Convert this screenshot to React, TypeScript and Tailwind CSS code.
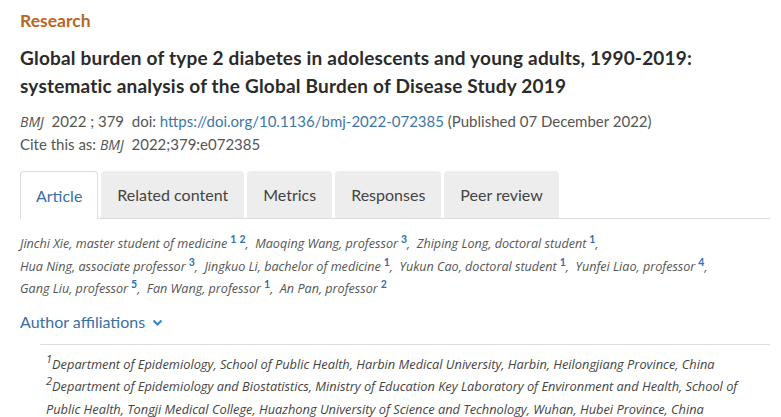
import React from "react";

const TABS = ["Article", "Related content", "Metrics", "Responses", "Peer review"];

type Author = { name: string; sup: string[] };

const AUTHOR_LINES: Author[][] = [
  [
    { name: "Jinchi Xie, master student of medicine", sup: ["1", "2"] },
    { name: "Maoqing Wang, professor", sup: ["3"] },
    { name: "Zhiping Long, doctoral student", sup: ["1"] },
  ],
  [
    { name: "Hua Ning, associate professor", sup: ["3"] },
    { name: "Jingkuo Li, bachelor of medicine", sup: ["1"] },
    { name: "Yukun Cao, doctoral student", sup: ["1"] },
    { name: "Yunfei Liao, professor", sup: ["4"] },
  ],
  [
    { name: "Gang Liu, professor", sup: ["5"] },
    { name: "Fan Wang, professor", sup: ["1"] },
    { name: "An Pan, professor", sup: ["2"] },
  ],
];

const ITALIC = { fontFamily: "'Open Sans', 'DejaVu Sans', sans-serif" };

function Sup({ n }: { n: string }) {
  return (
    <sup
      className="text-[10.5px] font-bold text-[#2f6fae] ml-[3px] not-italic top-[-5px]"
      style={{ fontFamily: "Lato, sans-serif" }}
    >
      {n}
    </sup>
  );
}

export default function App() {
  return (
    <div
      className="w-[781px] h-[417px] overflow-hidden bg-white pl-5 pr-[11px] text-[#333]"
      style={{ fontFamily: "Lato, 'Open Sans', sans-serif" }}
    >
      <div className="pt-[10px] text-[17.5px] font-bold text-[#b9671f] leading-[22px]">Research</div>

      <h1 className="mt-[12px] text-[19px] tracking-[0.2px] font-bold leading-[28px] text-[#2b2b2b]">
        Global burden of type 2 diabetes in adolescents and young adults, 1990-2019:
        <br />
        systematic analysis of the Global Burden of Disease Study 2019
      </h1>

      <div className="mt-[10px] text-[15px] leading-[22px] text-[#555]">
        <div>
          <i style={ITALIC} className="text-[14px]">BMJ</i>&nbsp; 2022 ; 379&nbsp; doi:{" "}
          <span className="text-[#3d77a8]">https://doi.org/10.1136/bmj-2022-072385</span> (Published 07 December
          2022)
        </div>
        <div>
          Cite this as: <i style={ITALIC} className="text-[14px]">BMJ</i>&nbsp; 2022;379:e072385
        </div>
      </div>

      <div className="mt-[15px] flex gap-[3px] border-b border-[#dcdcdc]">
        {TABS.map((t, i) =>
          i === 0 ? (
            <div
              key={t}
              className="-mb-px h-[48px] px-[15px] flex items-center rounded-t-[4px] border border-b-0 border-[#dcdcdc] bg-white text-[16px] text-[#3a6fa5]"
            >
              {t}
            </div>
          ) : (
            <div
              key={t}
              className="h-[47px] px-[16px] flex items-center rounded-t-[4px] bg-[#ededed] text-[16px] text-[#444]"
            >
              {t}
            </div>
          )
        )}
      </div>

      <div className="mt-[14px] text-[12.6px] italic leading-[22.5px] text-[#555]" style={ITALIC}>
        {AUTHOR_LINES.map((line, li) => (
          <div key={li}>
            {line.map((a, ai) => (
              <span key={a.name}>
                {a.name}
                {a.sup.map((s) => (
                  <Sup key={s} n={s} />
                ))}
                {(ai < line.length - 1 || li < AUTHOR_LINES.length - 1) && <span>,&nbsp; </span>}
              </span>
            ))}
          </div>
        ))}
      </div>

      <div className="mt-[9px] flex items-center gap-[7px] text-[16px] text-[#3a6fa5] leading-[24px]">
        Author affiliations
        <svg width="11" height="8" viewBox="0 0 11 8" className="mt-[2px]">
          <path d="M1.5 1.5 L5.5 5.5 L9.5 1.5" fill="none" stroke="#3a86c8" strokeWidth="2.2" />
        </svg>
      </div>

      <div
        className="ml-5 mt-[10px] border-t border-[#dcdcdc] pl-[6px] pt-[8px] text-[12.8px] italic leading-[22.5px] text-[#444]"
        style={ITALIC}
      >
        <div>
          <sup className="text-[11px] top-[-6px]">1</sup>Department of Epidemiology, School of Public Health, Harbin
          Medical University, Harbin, Heilongjiang Province, China
        </div>
        <div>
          <sup className="text-[11px] top-[-6px]">2</sup>Department of Epidemiology and Biostatistics, Ministry of
          Education Key Laboratory of Environment and Health, School of
          <br />
          Public Health, Tongji Medical College, Huazhong University of Science and Technology, Wuhan, Hubei Province,
          China
        </div>
      </div>
    </div>
  );
}
